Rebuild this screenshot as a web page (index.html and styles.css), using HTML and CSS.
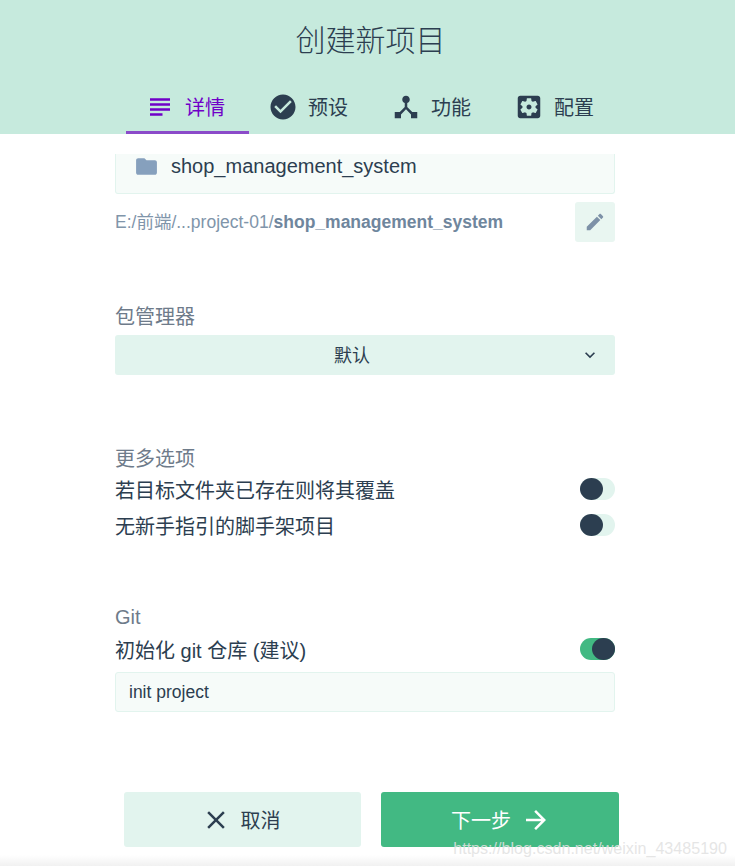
FILE: index.html
```html
<!DOCTYPE html>
<html lang="zh-CN">
<head>
    <meta charset="UTF-8">
    <title>创建新项目</title>
    <link rel="stylesheet" href="styles.css">
</head>
<body>
    <div class="page">
        <header class="header">
            <h1 class="title">创建新项目</h1>
            <nav class="tabs">
                <div class="tab active">
                    <svg class="icon" viewBox="0 0 24 24"><path d="M14 17H4v2h10v-2zm6-8H4v2h16V9zM4 15h16v-2H4v2zM4 5v2h16V5H4z"/></svg>
                    <span>详情</span>
                </div>
                <div class="tab">
                    <svg class="icon" viewBox="0 0 24 24"><path d="M12 2C6.48 2 2 6.48 2 12s4.48 10 10 10 10-4.48 10-10S17.52 2 12 2zm-2 15l-5-5 1.41-1.41L10 14.17l7.59-7.59L19 8l-9 9z"/></svg>
                    <span>预设</span>
                </div>
                <div class="tab">
                    <svg class="icon" viewBox="0 0 24 24"><path d="M17 16l-4-4V8.82C14.16 8.4 15 7.3 15 6c0-1.66-1.34-3-3-3S9 4.34 9 6c0 1.3.84 2.4 2 2.82V12l-4 4H3v5h5v-3.05l4-4.2 4 4.2V21h5v-5h-4z"/></svg>
                    <span>功能</span>
                </div>
                <div class="tab">
                    <svg class="icon" viewBox="0 0 24 24"><path d="M12 10c-1.1 0-2 .9-2 2s.9 2 2 2 2-.9 2-2-.9-2-2-2zm7-7H5c-1.11 0-2 .9-2 2v14c0 1.1.89 2 2 2h14c1.11 0 2-.9 2-2V5c0-1.1-.89-2-2-2zm-1.75 9c0 .23-.02.46-.05.68l1.48 1.16c.13.11.17.3.08.45l-1.4 2.42c-.09.15-.27.21-.43.15l-1.74-.7c-.36.28-.76.51-1.18.69l-.26 1.85c-.03.17-.18.3-.35.3h-2.8c-.17 0-.32-.13-.35-.29l-.26-1.85c-.43-.18-.82-.41-1.18-.69l-1.74.7c-.16.06-.34 0-.43-.15l-1.4-2.42c-.09-.15-.05-.34.08-.45l1.48-1.16c-.03-.23-.05-.46-.05-.69 0-.23.02-.46.05-.68l-1.48-1.16c-.13-.11-.17-.3-.08-.45l1.4-2.42c.09-.15.27-.21.43-.15l1.74.7c.36-.28.76-.51 1.18-.69l.26-1.85c.03-.17.18-.3.35-.3h2.8c.17 0 .32.13.35.29l.26 1.85c.43.18.82.41 1.18.69l1.74-.7c.16-.06.34 0 .43.15l1.4 2.42c.09.15.05.34-.08.45l-1.48 1.16c.03.23.05.46.05.69z"/></svg>
                    <span>配置</span>
                </div>
            </nav>
        </header>

        <main class="content">
            <div class="field-box folder-box">
                <svg class="folder-icon" viewBox="0 0 24 24"><path d="M10 4H4c-1.1 0-1.99.9-1.99 2L2 18c0 1.1.9 2 2 2h16c1.1 0 2-.9 2-2V8c0-1.1-.9-2-2-2h-8l-2-2z"/></svg>
                <span>shop_management_system</span>
            </div>
            <div class="path-row">
                <div class="path">E:/前端/...project-01/<b>shop_management_system</b></div>
                <button class="edit-btn">
                    <svg class="edit-icon" viewBox="0 0 24 24"><path d="M3 17.25V21h3.75L17.81 9.94l-3.75-3.75L3 17.25zM20.71 7.04c.39-.39.39-1.02 0-1.41l-2.34-2.34c-.39-.39-1.02-.39-1.41 0l-1.83 1.83 3.75 3.75 1.83-1.83z"/></svg>
                </button>
            </div>

            <section class="group group-manager">
                <div class="label">包管理器</div>
                <div class="select">
                    <span>默认</span>
                    <svg class="chevron" viewBox="0 0 24 24"><path d="M16.59 8.59L12 13.17 7.41 8.59 6 10l6 6 6-6z"/></svg>
                </div>
            </section>

            <section class="group group-more">
                <div class="label">更多选项</div>
                <div class="switch-row">
                    <span>若目标文件夹已存在则将其覆盖</span>
                    <div class="switch"><div class="knob"></div></div>
                </div>
                <div class="switch-row">
                    <span>无新手指引的脚手架项目</span>
                    <div class="switch"><div class="knob"></div></div>
                </div>
            </section>

            <section class="group group-git">
                <div class="label">Git</div>
                <div class="switch-row">
                    <span>初始化 git 仓库 (建议)</span>
                    <div class="switch on"><div class="knob"></div></div>
                </div>
                <div class="field-box commit-box">init project</div>
            </section>
        </main>

        <footer class="actions">
            <button class="btn btn-cancel">
                <svg class="icon" viewBox="0 0 24 24"><path d="M19 6.41L17.59 5 12 10.59 6.41 5 5 6.41 10.59 12 5 17.59 6.41 19 12 13.41 17.59 19 19 17.59 13.41 12z"/></svg>
                <span>取消</span>
            </button>
            <button class="btn btn-next">
                <span>下一步</span>
                <svg class="icon" viewBox="0 0 24 24"><path d="M12 4l-1.41 1.41L16.17 11H4v2h12.17l-5.58 5.59L12 20l8-8z"/></svg>
            </button>
        </footer>

        <div class="watermark">https://blog.csdn.net/weixin_43485190</div>
    </div>
</body>
</html>
```

FILE: styles.css
```css
* {
    margin: 0;
    padding: 0;
    box-sizing: border-box;
}

body {
    width: 735px;
    height: 866px;
    background: #fff;
    color: #2c3e50;
    font-family: "Liberation Sans", "Noto Sans CJK SC", sans-serif;
    font-size: 20px;
    overflow: hidden;
}

.page {
    width: 100%;
    height: 100%;
    position: relative;
    overflow: hidden;
    background: linear-gradient(180deg, #fff 855px, #f1f1f1 866px);
}

/* 顶部 */
.header {
    height: 134px;
    background: #c6eadd;
    padding-top: 19px;
}

.title {
    font-size: 30px;
    font-weight: 300;
    line-height: 44px;
    text-align: center;
    color: #2c3e50;
    padding-left: 6px;
}

.tabs {
    display: flex;
    margin: 22px 0 0 126px;
}

.tab {
    width: 123px;
    height: 49px;
    display: flex;
    align-items: center;
    justify-content: center;
    gap: 10px;
    border-bottom: 3px solid transparent;
    padding-right: 5px;
    padding-bottom: 3px;
}

.tab .icon {
    fill: #2c3e50;
}

.tab.active {
    color: #7000c8;
    border-bottom-color: #8b4bc9;
}

.tab.active .icon {
    fill: #7000c8;
}

.icon {
    width: 30px;
    height: 30px;
    flex-shrink: 0;
    fill: currentColor;
}

/* 表单 */
.content {
    width: 500px;
    margin: 20px 0 0 115px;
}

.field-box {
    background: #f6fbf9;
    border: 1px solid #e2f4ee;
    border-radius: 3px;
    display: flex;
    align-items: center;
}

.folder-box {
    height: 40px;
    padding: 0 0 14px 18px;
    gap: 12px;
    border-top: none;
    border-radius: 0 0 3px 3px;
}

.folder-icon {
    width: 25px;
    height: 25px;
    fill: #86a0bd;
}

.path-row {
    display: flex;
    align-items: center;
    justify-content: space-between;
    margin-top: 8px;
}

.path {
    font-size: 17.5px;
    color: #8095aa;
    padding-bottom: 3px;
}

.path b {
    color: #6f869d;
}

.edit-btn {
    width: 40px;
    height: 40px;
    border: none;
    border-radius: 3px;
    background: #e9f6f1;
    display: flex;
    align-items: center;
    justify-content: center;
}

.edit-icon {
    width: 22px;
    height: 22px;
    fill: #7d91a7;
}

.group-manager {
    margin-top: 61px;
}

.group-more {
    margin-top: 70px;
}

.group-more .label {
    margin-bottom: -2px;
}

.group-git {
    margin-top: 60px;
}

.label {
    color: #6e7b8a;
    line-height: 28px;
}

.select {
    height: 40px;
    margin-top: 4px;
    padding: 0 26px 2px 0;
    background: #e2f4ee;
    border-radius: 3px;
    font-size: 18px;
    display: flex;
    align-items: center;
    justify-content: center;
    position: relative;
}

.chevron {
    position: absolute;
    right: 15px;
    top: 10px;
    width: 20px;
    height: 20px;
    fill: #2c3e50;
}

.switch-row {
    display: flex;
    align-items: center;
    justify-content: space-between;
    height: 36px;
}

.switch {
    width: 35px;
    height: 22px;
    border-radius: 11px;
    background: #e2f4ee;
    display: flex;
}

.switch.on {
    background: #42b983;
    justify-content: flex-end;
}

.knob {
    width: 23px;
    height: 22px;
    border-radius: 50%;
    background: #2c3e50;
}

.commit-box {
    height: 40px;
    margin-top: 5px;
    padding-left: 13px;
    font-size: 17.5px;
}

/* 底部按钮 */
.actions {
    display: flex;
    gap: 20px;
    margin: 80px 0 0 124px;
}

.btn {
    width: 237px;
    height: 55px;
    border: none;
    border-radius: 3px;
    font-family: inherit;
    font-size: 20px;
    display: flex;
    align-items: center;
    justify-content: center;
    gap: 10px;
}

.btn-cancel {
    background: #e2f4ee;
    color: #2c3e50;
    padding-right: 4px;
}

.btn-next {
    width: 238px;
    background: #42b983;
    color: #fff;
    padding-left: 2px;
}

.watermark {
    position: absolute;
    right: 8px;
    bottom: 8px;
    font-size: 16.1px;
    color: rgba(225, 225, 225, 0.85);
}
```
